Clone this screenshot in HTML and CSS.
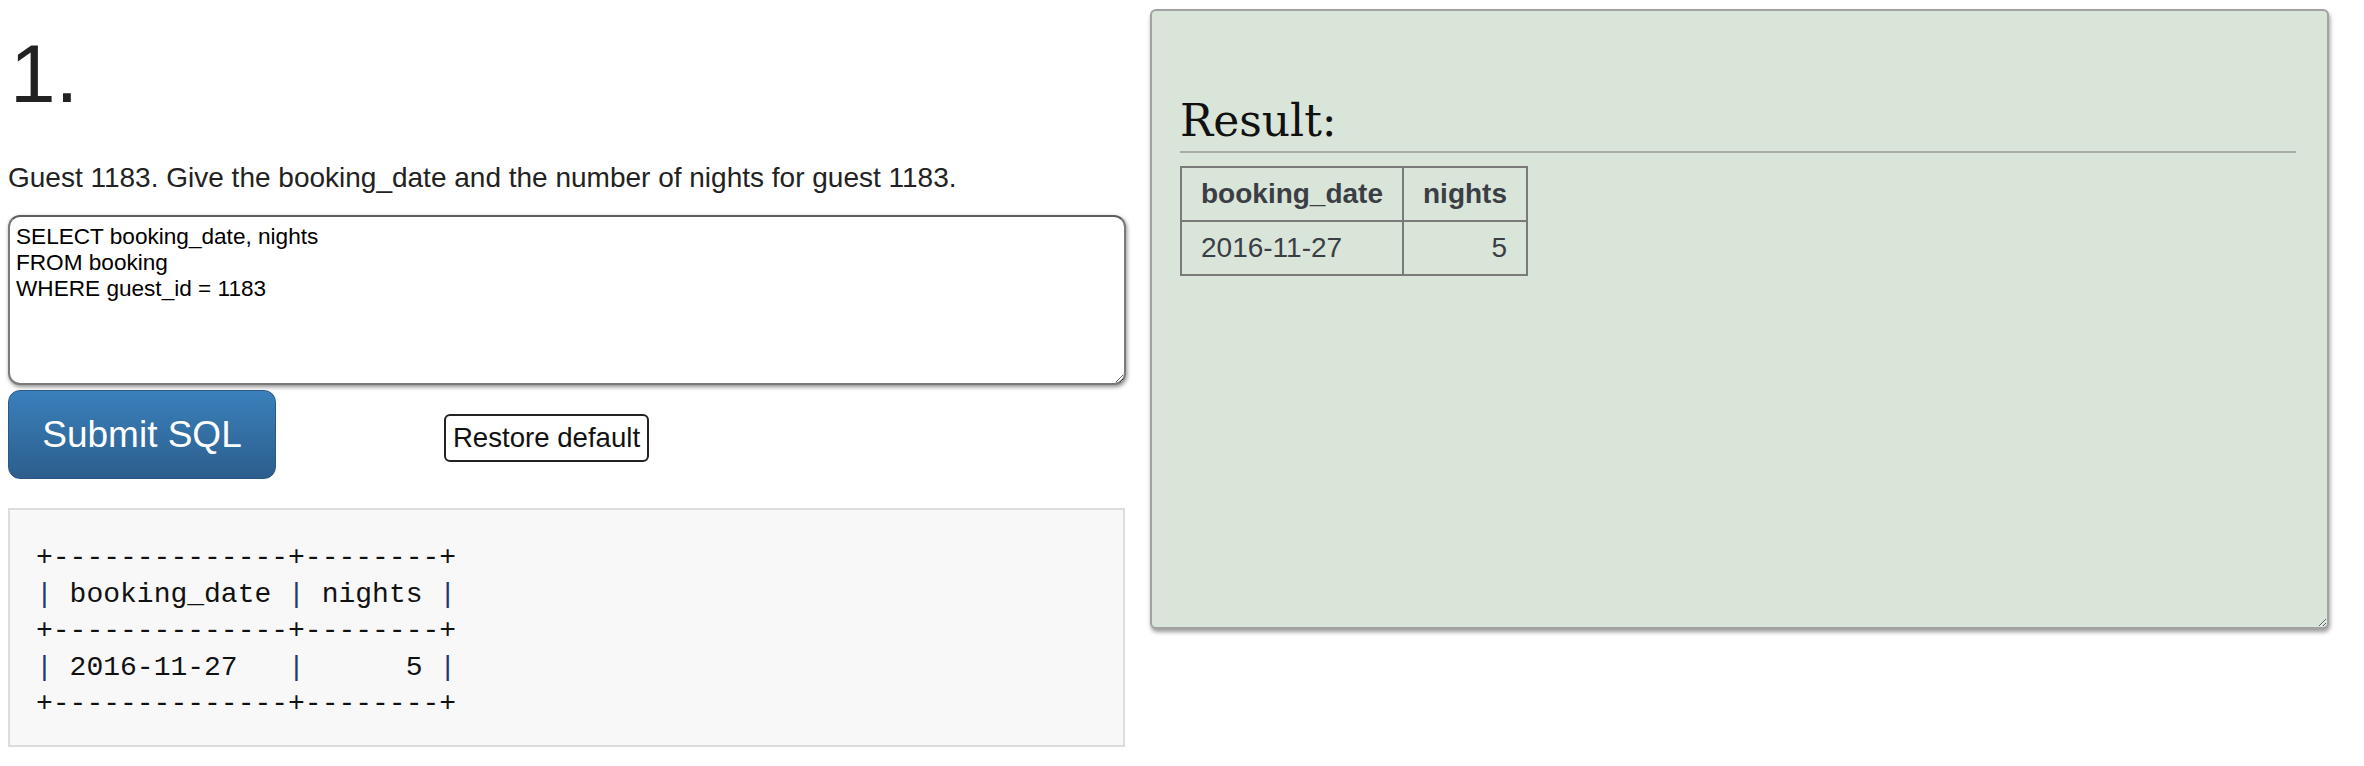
FILE: index.html
```html
<!DOCTYPE html>
<html>
<head>
<meta charset="utf-8">
<link rel="stylesheet" href="styles.css">
</head>
<body>
<div class="page">
  <div class="left">
    <h1 class="num">1.</h1>
    <p class="question">Guest 1183. Give the booking_date and the number of nights for guest 1183.</p>
    <textarea class="sql" spellcheck="false">SELECT booking_date, nights
FROM booking
WHERE guest_id = 1183</textarea>
    <div class="actions">
      <button class="submit">Submit SQL</button>
      <button class="restore">Restore default</button>
    </div>
    <pre class="ascii">+--------------+--------+
<span class="p">|</span> booking_date <span class="p">|</span> nights <span class="p">|</span>
+--------------+--------+
<span class="p">|</span> 2016-11-27   <span class="p">|</span>      5 <span class="p">|</span>
+--------------+--------+</pre>
  </div>
  <div class="result">
    <h2 class="result-title">Result:</h2>
    <hr class="rule">
    <table class="res">
      <thead>
        <tr><th>booking_date</th><th>nights</th></tr>
      </thead>
      <tbody>
        <tr><td>2016-11-27</td><td class="n">5</td></tr>
      </tbody>
    </table>
  </div>
</div>
</body>
</html>
```
FILE: styles.css
```css
html, body {
  margin: 0;
  padding: 0;
  background: #ffffff;
}
body {
  font-family: "Liberation Sans", Arial, sans-serif;
  color: #222;
}
.page {
  display: flex;
  align-items: flex-start;
  gap: 24px;
  padding: 9px 8px 0 8px;
}
.left {
  width: 1118px;
  flex: none;
  display: flex;
  flex-direction: column;
}
.num {
  margin: 20px 0 0 0;
  padding-left: 2px;
  font-size: 82px;
  line-height: 90px;
  font-weight: normal;
  color: #222;
}
.question {
  margin: 43px 0 0 0;
  font-size: 28px;
  line-height: 32px;
  color: #222;
}
.sql {
  box-sizing: border-box;
  margin: 21px 0 0 0;
  width: 1118px;
  height: 170px;
  padding: 7px 5px 4px 6px;
  font-family: "Liberation Sans", Arial, sans-serif;
  font-size: 22.6px;
  line-height: 26px;
  color: #000;
  background: #fff;
  border: 2px solid #7a7a7a;
  border-top-color: #5e5e5e;
  border-radius: 12px;
  box-shadow: 1px 2px 4px rgba(0,0,0,0.45);
  resize: both;
  outline: none;
}
.actions {
  display: flex;
  align-items: baseline;
  margin-top: 5px;
}
.submit {
  box-sizing: border-box;
  width: 268px;
  height: 89px;
  font-family: "Liberation Sans", Arial, sans-serif;
  font-size: 37px;
  color: #fff;
  background: linear-gradient(to bottom, #3a80bb 0%, #2c5e8d 100%);
  border: 1px solid #2a5985;
  border-radius: 12px;
  padding: 0;
}
.restore {
  box-sizing: border-box;
  width: 205px;
  height: 48px;
  margin-left: 168px;
  font-family: "Liberation Sans", Arial, sans-serif;
  font-size: 27.6px;
  color: #111;
  background: #fff;
  border: 2px solid #222;
  border-radius: 6px;
  padding: 0;
}
.ascii {
  box-sizing: border-box;
  margin: 29px 0 0 0;
  width: 1117px;
  height: 239px;
  padding: 30px 26px 22px 26px;
  background: #f8f8f8;
  border: 2px solid #dcdcdc;
  font-family: "Liberation Mono", "Courier New", monospace;
  font-size: 28px;
  line-height: 36.5px;
  color: #111;
}
.ascii .p {
  color: #22386a;
}
.result {
  box-sizing: border-box;
  flex: none;
  width: 1179px;
  height: 620px;
  padding: 0 31px 0 28px;
  background: #dae5d9;
  border: 2px solid #a2a2a2;
  border-radius: 6px;
  box-shadow: 1px 3px 4px rgba(0,0,0,0.4);
  resize: both;
  overflow: auto;
}
.result-title {
  margin: 84px 0 0 0;
  font-family: "DejaVu Serif", Georgia, serif;
  font-size: 44px;
  line-height: 51px;
  font-weight: normal;
  color: #111;
}
.rule {
  margin: 5px 0 13px 0;
  border: 0;
  height: 2px;
  background: #a8aba8;
}
.res {
  border-collapse: collapse;
  border: 2px solid #7a7a7a;
  font-family: "Liberation Sans", Arial, sans-serif;
  font-size: 28px;
  line-height: 32px;
  color: #3b3e45;
}
.res th, .res td {
  border: 2px solid #7a7a7a;
  padding: 10px 19px;
  text-align: left;
}
.res th {
  font-weight: bold;
}
.res td.n {
  text-align: right;
}
```
